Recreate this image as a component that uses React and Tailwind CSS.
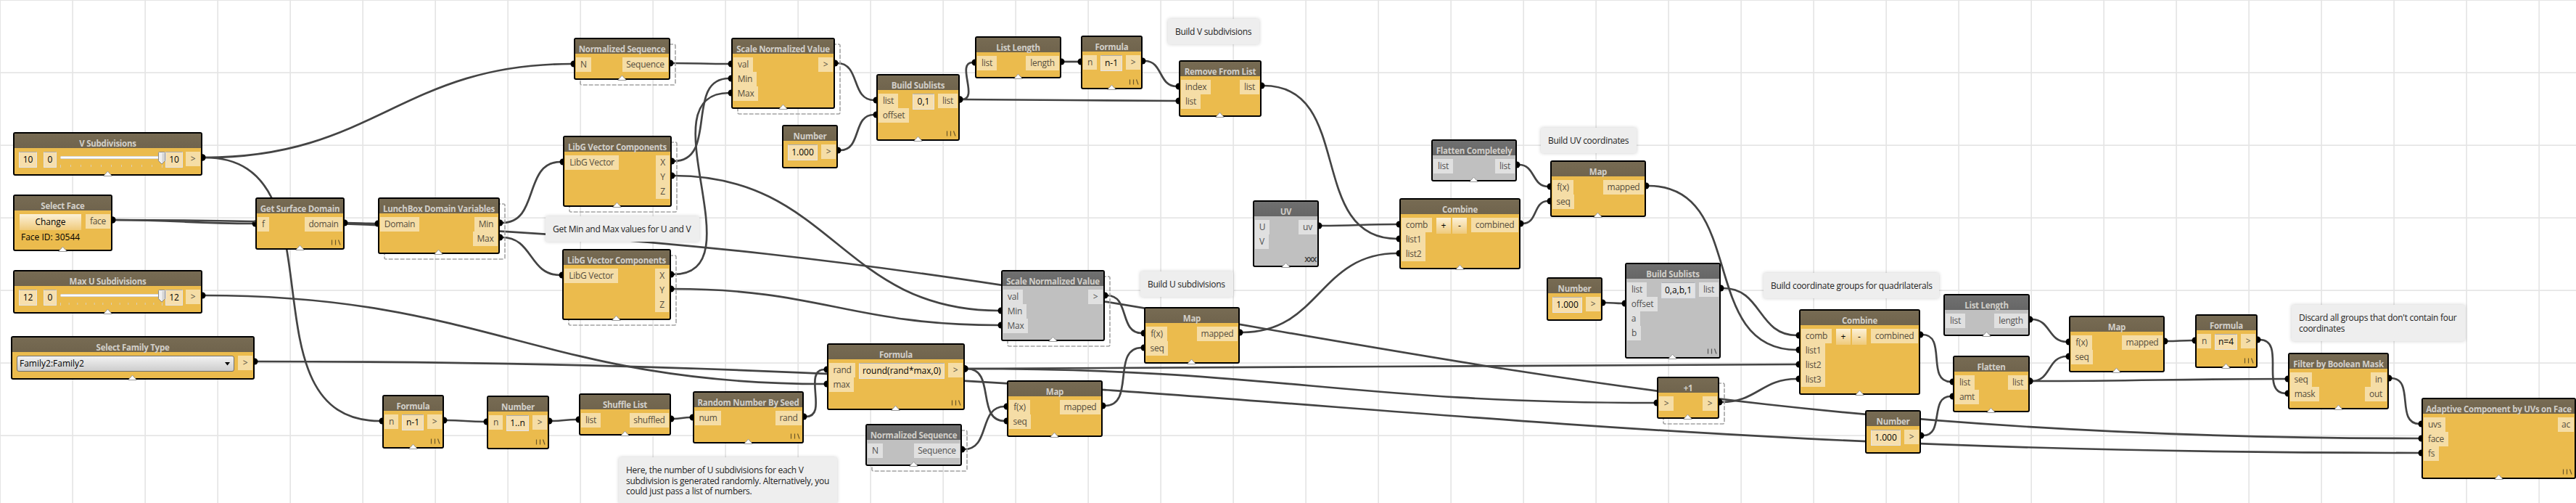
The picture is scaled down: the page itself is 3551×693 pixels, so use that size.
import React from "react";

const NODES = {
  vsub: { t: "V Subdivisions", x: 18, y: 182, w: 261, h: 60, slider: ["10", "0", "10", 11], out: [[">", 20]], tri: 1 },
  face: { t: "Select Face", x: 18, y: 268, w: 137, h: 78, change: 1, out: [["face", 34]], tri: 1 },
  surf: { t: "Get Surface Domain", x: 352, y: 272, w: 123, h: 72, in: [["f", 16]], out: [["domain", 52]], lace: 1, tri: 1 },
  maxu: { t: "Max U Subdivisions", x: 18, y: 372, w: 261, h: 60, slider: ["12", "0", "12", 13], out: [[">", 20]], tri: 1 },
  fam: { t: "Select Family Type", x: 15, y: 463, w: 336, h: 60, combo: 1, out: [[">", 20]], tri: 1 },
  lunch: { t: "LunchBox Domain Variables", x: 521, y: 272, w: 168, h: 78, in: [["Domain", 54]], out: [["Min", 32], ["Max", 34]], dash: 1, tri: 1 },
  lib2: { t: "LibG Vector Components", x: 775, y: 343, w: 150, h: 98, in: [["LibG Vector", 74]], out: [["X", 19], ["Y", 19], ["Z", 19]], dash: 1, tri: 1 },
  lib1: { t: "LibG Vector Components", x: 776, y: 187, w: 150, h: 98, in: [["LibG Vector", 74]], out: [["X", 19], ["Y", 19], ["Z", 19]], dash: 1, tri: 1 },
  nseq: { t: "Normalized Sequence", x: 791, y: 52, w: 133, h: 58, in: [["N", 21]], out: [["Sequence", 63]], dash: 1, tri: 1 },
  scale: { t: "Scale Normalized Value", x: 1008, y: 52, w: 143, h: 98, in: [["val", 27], ["Min", 32], ["Max", 34]], out: [[">", 20]], dash: 1, tri: 1 },
  num1: { t: "Number", x: 1078, y: 172, w: 77, h: 60, edit: ["1.000", 41], out: [[">", 20]] },
  sub1: { t: "Build Sublists", x: 1208, y: 102, w: 115, h: 92, in: [["list", 27], ["offset", 42]], edit: ["0,1", 30], out: [["list", 27]], lace: 1, tri: 1 },
  len1: { t: "List Length", x: 1344, y: 50, w: 119, h: 58, in: [["list", 27]], out: [["length", 46]], tri: 1 },
  form1: { t: "Formula", x: 1490, y: 49, w: 85, h: 74, in: [["n", 19]], edit: ["n-1", 30], out: [[">", 20]], lace: 1, tri: 1 },
  rem: { t: "Remove From List", x: 1625, y: 83, w: 114, h: 78, in: [["index", 41], ["list", 27]], out: [["list", 27]], tri: 1 },
  form2: { t: "Formula", x: 527, y: 544, w: 85, h: 74, in: [["n", 19]], edit: ["n-1", 30], out: [[">", 20]], lace: 1, tri: 1 },
  num2: { t: "Number", x: 671, y: 545, w: 86, h: 74, in: [["n", 19]], edit: ["1..n", 31], out: [[">", 20]], lace: 1 },
  shuf: { t: "Shuffle List", x: 798, y: 542, w: 127, h: 58, in: [["list", 27]], out: [["shuffled", 54]], tri: 1 },
  rand: { t: "Random Number By Seed", x: 955, y: 539, w: 153, h: 72, in: [["num", 36]], out: [["rand", 36]], lace: 1, tri: 1 },
  form3: { t: "Formula", x: 1140, y: 473, w: 190, h: 92, in: [["rand", 36], ["max", 34]], edit: ["round(rand*max,0)", 118], out: [[">", 20]], lace: 1, tri: 1 },
  gseq: { t: "Normalized Sequence", x: 1193, y: 584, w: 133, h: 58, gray: 1, in: [["N", 21]], out: [["Sequence", 63]], dash: 1, tri: 1 },
  gscale: { t: "Scale Normalized Value", x: 1380, y: 372, w: 143, h: 98, gray: 1, in: [["val", 27], ["Min", 32], ["Max", 34]], out: [[">", 20]], dash: 1, tri: 1 },
  map1: { t: "Map", x: 1577, y: 423, w: 132, h: 78, in: [["f(x)", 29], ["seq", 30]], out: [["mapped", 56]], tri: 1 },
  map2: { t: "Map", x: 1388, y: 524, w: 132, h: 78, in: [["f(x)", 29], ["seq", 30]], out: [["mapped", 56]], tri: 1 },
  uv: { t: "UV", x: 1727, y: 276, w: 91, h: 92, gray: 1, in: [["U", 20], ["V", 19]], out: [["uv", 25]], cross: 1, tri: 1 },
  comb1: { t: "Combine", x: 1929, y: 273, w: 167, h: 98, in: [["comb", 42], ["list1", 33], ["list2", 33]], pm: 1, out: [["combined", 65]], tri: 1 },
  flatc: { t: "Flatten Completely", x: 1973, y: 192, w: 118, h: 58, gray: 1, in: [["list", 27]], out: [["list", 27]], tri: 1 },
  map3: { t: "Map", x: 2137, y: 221, w: 132, h: 78, in: [["f(x)", 29], ["seq", 30]], out: [["mapped", 56]], tri: 1 },
  num3: { t: "Number", x: 2132, y: 382, w: 77, h: 60, edit: ["1.000", 41], out: [[">", 20]] },
  sub2: { t: "Build Sublists", x: 2240, y: 362, w: 132, h: 132, gray: 1, in: [["list", 27], ["offset", 42], ["a", 18], ["b", 19]], edit: ["0,a,b,1", 47], out: [["list", 27]], lace: 1, tri: 1 },
  comb2: { t: "Combine", x: 2480, y: 426, w: 167, h: 118, in: [["comb", 42], ["list1", 33], ["list2", 33], ["list3", 33]], pm: 1, out: [["combined", 65]], tri: 1 },
  plus: { t: "+1", x: 2284, y: 519, w: 86, h: 58, in: [[">", 20]], out: [[">", 20]], dash: 1, tri: 1 },
  num4: { t: "Number", x: 2571, y: 565, w: 77, h: 60, edit: ["1.000", 41], out: [[">", 20]] },
  len2: { t: "List Length", x: 2679, y: 405, w: 119, h: 58, gray: 1, in: [["list", 27]], out: [["length", 46]], tri: 1 },
  flat: { t: "Flatten", x: 2692, y: 490, w: 106, h: 78, in: [["list", 27], ["amt", 33]], out: [["list", 27]], tri: 1 },
  map4: { t: "Map", x: 2852, y: 435, w: 132, h: 78, in: [["f(x)", 29], ["seq", 30]], out: [["mapped", 56]], tri: 1 },
  form4: { t: "Formula", x: 3026, y: 433, w: 86, h: 74, in: [["n", 19]], edit: ["n=4", 31], out: [[">", 20]], lace: 1, tri: 1 },
  filt: { t: "Filter by Boolean Mask", x: 3154, y: 486, w: 139, h: 78, in: [["seq", 30], ["mask", 40]], out: [["in", 22], ["out", 30]], tri: 1 },
  adapt: { t: "Adaptive Component by UVs on Face", x: 3338, y: 548, w: 213, h: 112, in: [["uvs", 30], ["face", 34], ["fs", 21]], out: [["ac", 22]], lace: 1, tri: 1 },
};

// [source node, output index, target node, input index]
const WIRES = [
  ["vsub", 0, "nseq", 0], ["vsub", 0, "form2", 0], ["face", 0, "surf", 0], ["face", 0, "adapt", 1],
  ["surf", 0, "lunch", 0], ["lunch", 0, "lib1", 0], ["lunch", 1, "lib2", 0], ["lib1", 0, "scale", 1],
  ["lib2", 0, "scale", 2], ["lib1", 1, "gscale", 1], ["lib2", 1, "gscale", 2], ["nseq", 0, "scale", 0],
  ["scale", 0, "sub1", 0], ["num1", 0, "sub1", 1], ["sub1", 0, "len1", 0], ["sub1", 0, "rem", 1],
  ["len1", 0, "form1", 0], ["form1", 0, "rem", 0], ["rem", 0, "comb1", 1], ["uv", 0, "comb1", 0],
  ["map1", 0, "comb1", 2], ["comb1", 0, "map3", 1], ["flatc", 0, "map3", 0], ["map3", 0, "comb2", 1],
  ["sub2", 0, "comb2", 0], ["num3", 0, "sub2", 1], ["form3", 0, "comb2", 2], ["form3", 0, "plus", 0],
  ["form3", 0, "map2", 1], ["gseq", 0, "map2", 0], ["map2", 0, "map1", 1], ["gscale", 0, "map1", 0],
  ["maxu", 0, "form3", 1], ["fam", 0, "adapt", 2], ["rand", 0, "form3", 0], ["form2", 0, "num2", 0],
  ["num2", 0, "shuf", 0], ["shuf", 0, "rand", 0], ["plus", 0, "comb2", 3], ["comb2", 0, "flat", 0],
  ["num4", 0, "flat", 1], ["flat", 0, "map4", 1], ["flat", 0, "filt", 0], ["len2", 0, "map4", 0],
  ["map4", 0, "form4", 0], ["form4", 0, "filt", 1], ["filt", 0, "adapt", 0],
];

const NOTES = [
  { x: 752, y: 298, w: 212, h: 35, lines: ["Get Min and Max values for U and V"] },
  { x: 1610, y: 26, w: 126, h: 35, lines: ["Build V subdivisions"] },
  { x: 853, y: 630, w: 301, h: 64, lines: ["Here, the number of U subdivisions for each V", "subdivision is generated randomly. Alternatively, you", "could just pass a list of numbers."] },
  { x: 1572, y: 374, w: 128, h: 35, lines: ["Build U subdivisions"] },
  { x: 2124, y: 176, w: 132, h: 35, lines: ["Build UV coordinates"] },
  { x: 2431, y: 376, w: 242, h: 35, lines: ["Build coordinate groups for quadrilaterals"] },
  { x: 3159, y: 420, w: 239, h: 50, lines: ["Discard all groups that don't contain four", "coordinates"] },
];

function wireEnds([a, i, b, j]) {
  const s = NODES[a];
  const e = NODES[b];
  return [s.x + s.w, s.y + 35 + 20 * i, e.x, e.y + 36 + 20 * j];
}

function Wires() {
  return (
    <svg className="absolute left-0 top-0" width="3551" height="693">
      {WIRES.map((w, k) => {
        const [x1, y1, x2, y2] = wireEnds(w);
        const sx = x1 + 3, ex = x2 - 3;
        const o = 0.45 * Math.hypot(ex - sx, y2 - y1);
        return (
          <g key={k}>
            <path d={`M${sx} ${y1}C${sx + o} ${y1} ${ex - o} ${y2} ${ex} ${y2}`} fill="none" stroke="#444" strokeWidth="2.7" />
            <circle cx={x1} cy={y1} r="4.5" />
            <circle cx={x2} cy={y2} r="4.5" />
          </g>
        );
      })}
    </svg>
  );
}

function Ports({ list, gray, right }) {
  return (
    <div className={"flex flex-col " + (right ? "items-end" : "items-start")}>
      {(list || []).map(([t, w], i) => (
        <div key={i} style={{ width: w }} className={"flex h-5 items-center justify-center whitespace-nowrap text-[12px] leading-5 tracking-[-0.28px] " + (gray ? "bg-[#e0e0e0] text-[#505050]" : "bg-[#f5dda6] text-[#554d3c]")}>
          {t}
        </div>
      ))}
    </div>
  );
}

function Edit({ text, w, gray, className = "" }) {
  return (
    <div style={{ width: w }} className={"flex h-[22px] shrink-0 items-center justify-center whitespace-nowrap rounded-[1px] border border-t-[#abadb3] text-[12px] leading-5 text-black " + (gray ? "border-[#d8dde6] bg-[#e3e3e3] " : "border-[#e2e3ea] bg-[#f7dfad] ") + className}>
      {text}
    </div>
  );
}

function Slider({ lo, min, hi, ticks }) {
  return (
    <div className="flex">
      <Edit text={lo} w={25} />
      <Edit text={min} w={18} className="ml-[9px]" />
      <svg width="150" height="22">
        <rect x="5.5" y="6.5" width="144" height="3" rx="1" fill="#fff" stroke="#d6d8da" />
        {Array.from({ length: ticks }, (_, i) => (
          <rect key={i} x={5 + (i * 140) / (ticks - 1)} y={18} width="1" height={i === 0 || i === ticks - 1 ? 4 : 3} fill="#d9cfb8" />
        ))}
        <path d="M140.5 1.5q0-1 1-1h7q1 0 1 1v11l-4.500 4.500l-4.500-4.500z" fill="#f0f0f0" stroke="#8a8a8a" />
        <path d="M145.500 2v13.500l3-3v-10.500z" fill="#d4d4d4" />
      </svg>
      <Edit text={hi} w={24} />
    </div>
  );
}

function Btn({ children, className }) {
  return <div className={"flex h-[22px] items-center justify-center bg-linear-to-b from-[#fcf1d8] to-[#efca7a] text-[12px] text-black " + className}>{children}</div>;
}

function Node({ n }) {
  return (
    <>
      {n.dash && (
        <svg className="absolute" style={{ left: n.x + 8, top: n.y + 8 }} width={n.w} height={n.h}>
          <rect x="1" y="1" width={n.w - 2} height={n.h - 2} rx="2" fill="none" stroke="#a3a3a3" strokeWidth="1.6" strokeDasharray="6 2" />
        </svg>
      )}
      <div className={"absolute flex flex-col rounded-[3px] border-2 border-black " + (n.gray ? "bg-[#c0c0c0]" : "bg-[#ebbb4d]")} style={{ left: n.x, top: n.y, width: n.w, height: n.h }}>
        <div className={"flex h-5 shrink-0 items-center justify-center whitespace-nowrap pt-[8px] text-[11.5px] font-bold leading-[12px] tracking-[-0.27px] text-[#d2cfc9] " + (n.gray ? "bg-linear-to-b from-[#707070] to-[#666666]" : "bg-linear-to-b from-[#776b53] to-[#70644d]")}>
          {n.t}
        </div>
        <div className="flex items-start justify-between px-px pt-[5px]">
          {n.in ? <Ports list={n.in} gray={n.gray} /> : null}
          {n.edit && <Edit text={n.edit[0]} w={n.edit[1]} gray={n.gray} className={n.in ? "" : "ml-[5px]"} />}
          {n.slider && <div className="ml-[5px]"><Slider lo={n.slider[0]} min={n.slider[1]} hi={n.slider[2]} ticks={n.slider[3]} /></div>}
          {n.change && (
            <div className="ml-[6px] flex flex-col">
              <Btn className="w-[85px]">Change</Btn>
              <div className="ml-[2px] mt-[1px] whitespace-nowrap text-[12px] leading-[18px] text-black">Face ID: 30544</div>
            </div>
          )}
          {n.combo && (
            <div className="ml-[5px] flex h-[22px] w-[300px] items-center justify-between rounded-[3px] border border-[#707070] bg-linear-to-b from-[#f2f2f2] to-[#cdcdcd] pl-[3px] pr-[5px] text-[12px] text-black">
              Family2:Family2
              <svg width="7" height="5"><path d="M0 0h7l-3.500 4.500z" /></svg>
            </div>
          )}
          {n.pm && <div className="flex gap-[2px]"><Btn className="w-5">+</Btn><Btn className="w-5">-</Btn></div>}
          <Ports list={n.out} gray={n.gray} right />
        </div>
        {n.lace && (
          <svg className="absolute bottom-[4px] right-[3px]" width="14" height="8">
            <path d="M1.500 0.500v7M6.500 0.500v7M10.500 0.500l2.500 7" fill="none" stroke={n.gray ? "#555" : "#6b5627"} strokeWidth="1.2" />
          </svg>
        )}
        {n.cross && <div className="absolute bottom-[2px] right-[2px] text-[12px] font-semibold leading-[14px] tracking-[-1.4px] text-[#444]">xxx</div>}
        {n.tri && (
          <svg className="absolute -bottom-[3px] left-1/2 -ml-[7px]" width="13" height="8">
            <path d="M6.500 1L12.200 7.500H.8z" fill="#fff" stroke="#999" strokeWidth="1" />
          </svg>
        )}
      </div>
    </>
  );
}

export default function App() {
  return (
    <div className="relative h-[693px] w-[3551px] overflow-hidden bg-white font-['Open_Sans',sans-serif]">
      <svg className="absolute left-0 top-0" width="3551" height="693">
        {Array.from({ length: 36 }, (_, i) => <rect key={i} x={i * 100 - 0.7} y="0" width="1.700" height="693" fill="#e5e5e5" />)}
        {Array.from({ length: 7 }, (_, i) => <rect key={"h" + i} x="0" y={i * 100 - 0.7} width="3551" height="1.700" fill="#e5e5e5" />)}
      </svg>
      <Wires />
      {NOTES.map((n, i) => (
        <div key={i} className="absolute flex flex-col rounded-[2px] bg-[#eeeeee] px-[10px] pt-[11px] text-[12px] leading-[14.5px] tracking-[-0.28px] text-[#222] shadow-[0_0_5px_rgba(0,0,0,0.2)]" style={{ left: n.x, top: n.y, width: n.w, height: n.h }}>
          {n.lines.map((l) => <div key={l} className="whitespace-nowrap">{l}</div>)}
        </div>
      ))}
      {Object.entries(NODES).map(([k, n]) => <Node key={k} n={n} />)}
    </div>
  );
}
